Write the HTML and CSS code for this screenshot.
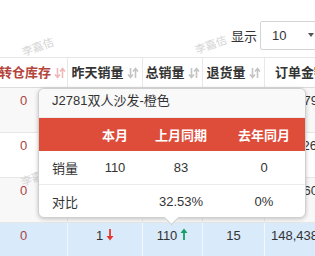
FILE: index.html
```html
<!DOCTYPE html>
<html>

<head>
    <meta charset="UTF-8">
    <title></title>
    <link rel="stylesheet" href="styles.css">
</head>

<body>
    <div id="page">
        <div class="toolbar">
            <span class="show_label">显示</span>
            <div class="page_size">
                <span>10</span>
                <i class="caret"></i>
            </div>
        </div>

        <div class="grid_wrap">
            <div class="grid">
                <div class="row head">
                    <div class="cell first">转仓库存
                        <svg class="sort active" viewBox="0 0 12 14"><path d="M3.5 2v9M1 8.5l2.5 3 2.5-3M8.5 12V3M6 5.5l2.5-3 2.5 3"/></svg>
                    </div>
                    <div class="cell">昨天销量
                        <svg class="sort" viewBox="0 0 12 14"><path d="M3.5 2v9M1 8.5l2.5 3 2.5-3M8.5 12V3M6 5.5l2.5-3 2.5 3"/></svg>
                    </div>
                    <div class="cell">总销量
                        <svg class="sort" viewBox="0 0 12 14"><path d="M3.5 2v9M1 8.5l2.5 3 2.5-3M8.5 12V3M6 5.5l2.5-3 2.5 3"/></svg>
                    </div>
                    <div class="cell">退货量
                        <svg class="sort" viewBox="0 0 12 14"><path d="M3.5 2v9M1 8.5l2.5 3 2.5-3M8.5 12V3M6 5.5l2.5-3 2.5 3"/></svg>
                    </div>
                    <div class="cell last">订单金额</div>
                </div>

                <div class="row odd">
                    <div class="cell stock">0</div>
                    <div class="cell">3</div>
                    <div class="cell">96</div>
                    <div class="cell">4</div>
                    <div class="cell money">132,479</div>
                </div>
                <div class="row">
                    <div class="cell stock">0</div>
                    <div class="cell">2</div>
                    <div class="cell">87</div>
                    <div class="cell">6</div>
                    <div class="cell money">118,526</div>
                </div>
                <div class="row odd">
                    <div class="cell stock">0</div>
                    <div class="cell">1</div>
                    <div class="cell">102</div>
                    <div class="cell">9</div>
                    <div class="cell money">126,660</div>
                </div>
                <div class="row hover">
                    <div class="cell stock">0</div>
                    <div class="cell">1<svg class="trend" viewBox="0 0 8 13"><path class="down" d="M4 1v8"/><path class="down_head" d="M0.5 8h7L4 12.5z"/></svg></div>
                    <div class="cell">110<svg class="trend" viewBox="0 0 8 13"><path class="up" d="M4 12V4"/><path class="up_head" d="M0.5 5h7L4 0.5z"/></svg></div>
                    <div class="cell">15</div>
                    <div class="cell money">148,438</div>
                </div>
            </div>
        </div>

        <!-- 水印 -->
        <div class="mark m1">李嘉佶</div>
        <div class="mark m2">李嘉佶</div>
        <div class="mark m3">李嘉佶</div>

        <!-- 悬浮提示 -->
        <div class="tip">
            <div class="tip_title">J2781双人沙发-橙色</div>
            <div class="tip_row tip_head">
                <div></div>
                <div>本月</div>
                <div>上月同期</div>
                <div class="c4">去年同月</div>
            </div>
            <div class="tip_row line">
                <div class="label">销量</div>
                <div>110</div>
                <div>83</div>
                <div class="c4">0</div>
            </div>
            <div class="tip_row">
                <div class="label">对比</div>
                <div></div>
                <div>32.53%</div>
                <div class="c4">0%</div>
            </div>
        </div>
    </div>
</body>

</html>
```

FILE: styles.css
```css
* {
    box-sizing: border-box;
}

body {
    margin: 0;
    font-family: "Liberation Sans", "Noto Sans CJK SC", sans-serif;
    font-size: 13px;
    color: #333;
}

#page {
    position: relative;
    width: 315px;
    height: 256px;
    overflow: hidden;
}

/* 顶部 */
.toolbar {
    height: 57px;
    padding-top: 13px;
    display: flex;
    align-items: center;
    justify-content: flex-end;
    margin-right: -15px;
}

.show_label {
    margin-right: 3px;
}

.page_size {
    width: 70px;
    height: 29px;
    border: 1px solid #d4d4d4;
    border-radius: 2px;
    display: flex;
    align-items: center;
    padding-left: 11px;
}

.page_size .caret {
    margin-left: auto;
    margin-right: 15px;
    border-left: 3px solid transparent;
    border-right: 3px solid transparent;
    border-top: 4px solid #555;
}

/* 表格 */
.grid_wrap {
    width: 315px;
    overflow: hidden;
}

.grid {
    width: 365px;
    margin-left: -20px;
}

.row {
    display: grid;
    grid-template-columns: 88px 75px 60px 62px 80px;
    height: 45px;
    border-bottom: 1px solid #e6e6e6;
}

.row.odd {
    background: #f8f8f8;
}

.row.hover {
    background: #d9eafb;
}

.row .cell {
    border-right: 1px solid #ececec;
    text-align: center;
    padding-top: 4px;
    line-height: 18px;
    white-space: nowrap;
}

.row.hover .cell {
    border-right-color: #f2f7fd;
}

.row .stock {
    color: #a94442;
}

.row .money {
    text-align: left;
    padding-left: 6px;
}

.row.head {
    height: 31px;
    border-top: 1px solid #e6e6e6;
    border-bottom: 1px solid #dcdcdc;
}

.row.head .cell {
    padding: 0;
    display: flex;
    align-items: center;
    justify-content: center;
    gap: 3px;
    font-weight: bold;
    border-right-color: #e8e8e8;
}

.row.head .first {
    justify-content: flex-end;
    padding-right: 1px;
    color: #b5443c;
}

.row.head .last {
    justify-content: flex-start;
    padding-left: 10px;
}

.sort {
    width: 12px;
    height: 14px;
    fill: none;
    stroke: #c4c4c4;
    stroke-width: 1.6;
}

.sort.active {
    stroke: #f0b9b9;
}

.trend {
    width: 8px;
    height: 13px;
    margin-left: 3px;
    vertical-align: -1px;
}

.trend .down {
    stroke: #e5392b;
    stroke-width: 1.8;
}

.trend .down_head {
    fill: #e5392b;
}

.trend .up {
    stroke: #15a067;
    stroke-width: 1.8;
}

.trend .up_head {
    fill: #15a067;
}

/* 水印 */
.mark {
    position: absolute;
    font-size: 11px;
    color: #d6d6d6;
    transform: rotate(-20deg);
    pointer-events: none;
}

.m1 {
    left: 21px;
    top: 38px;
}

.m2 {
    left: 194px;
    top: 36px;
}

.m3 {
    left: 20px;
    top: 168px;
}

/* 提示框 */
.tip {
    position: absolute;
    left: 38px;
    top: 88px;
    width: 268px;
    height: 130px;
    background: #fff;
    border: 1px solid #cfcfcf;
    border-radius: 6px;
    box-shadow: 0 1px 4px rgba(0, 0, 0, 0.22);
}

.tip::after {
    content: "";
    position: absolute;
    left: 127px;
    bottom: -6px;
    width: 10px;
    height: 10px;
    background: #fff;
    border-right: 1px solid #cfcfcf;
    border-bottom: 1px solid #cfcfcf;
    transform: rotate(45deg);
}

.tip_title {
    height: 29px;
    padding: 3px 13px 0;
    line-height: 18px;
    font-size: 13px;
    background: #f9f9f9;
    border-bottom: 1px solid #ececec;
    border-radius: 6px 6px 0 0;
}

.tip_row {
    display: grid;
    grid-template-columns: 46px 60px 72px 1fr;
    height: 33px;
    align-items: center;
    text-align: center;
}

.tip_row.line {
    height: 34px;
    border-bottom: 1px solid #ececec;
}

.tip_row .label {
    text-align: left;
    padding-left: 13px;
}

.tip_row .c4 {
    padding-left: 6px;
}

.tip_head {
    background: #de4c3a;
    color: #fff;
    font-weight: bold;
}
```
